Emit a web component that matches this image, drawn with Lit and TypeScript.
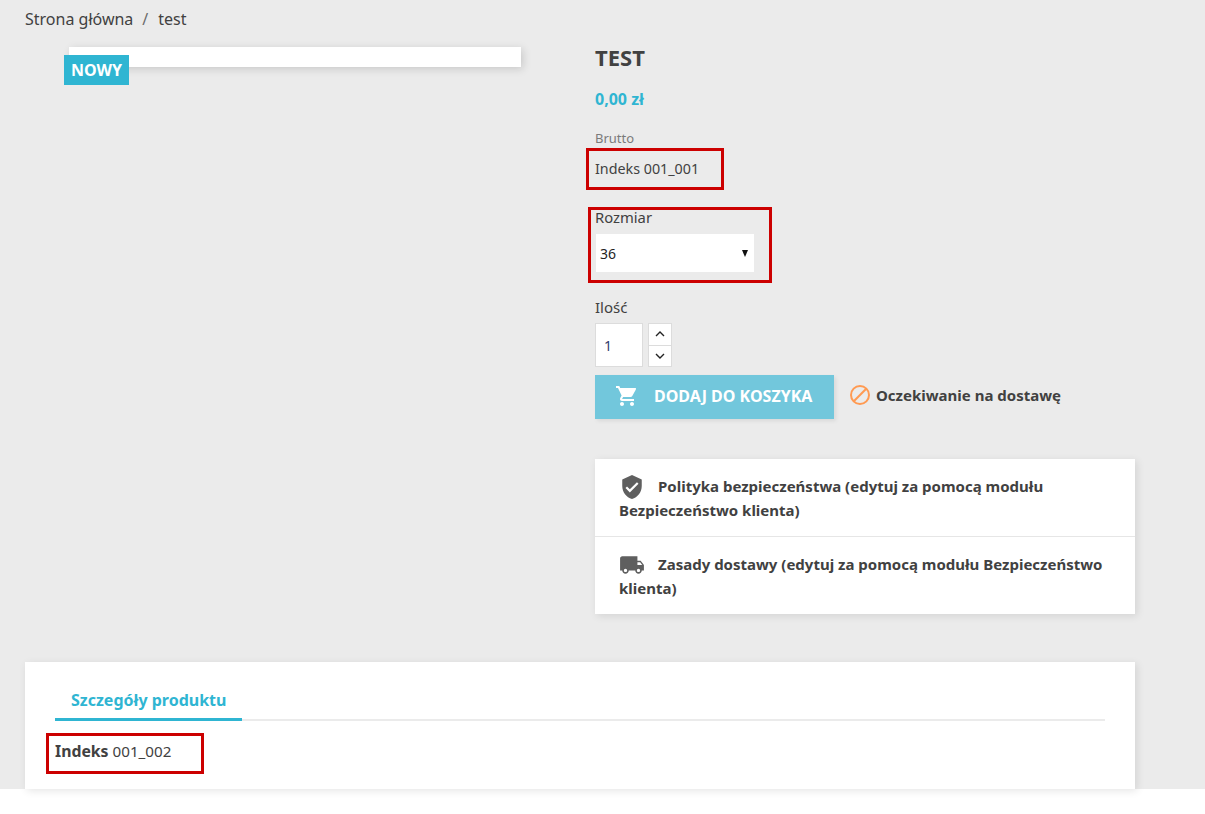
import { LitElement, html, css } from "lit";
import { customElement } from "lit/decorators.js";

@customElement("app-root")
export class AppRoot extends LitElement {
  static styles = css`
    :host { display: block; font-family: "Noto Sans", sans-serif; color: #414141; font-size: 14px; background: #fff; height: 814px; overflow: hidden; }
    * { box-sizing: border-box; }
    .page { background: #ebebeb; height: 789px; padding: 0 70px 0 25px; }
    .crumbs { display: flex; height: 38px; align-items: center; font-size: 16px; color: #414141; gap: 9px; }
    .crumbs .sep { color: #6c6c6c; margin-right: 1px; }
    .product { display: grid; grid-template-columns: 570px 540px; height: 624px; }
    .media { padding: 9px 0 0 44px; }
    .cover { position: relative; width: 452px; height: 20px; background: #fff; box-shadow: 2px 2px 8px 0 rgba(0,0,0,.15); }
    .flag { position: absolute; left: -5px; top: 8px; height: 30px; width: 65px; background: #2fb5d2; color: #fff; font-weight: 700; font-size: 16px; display: flex; align-items: center; justify-content: center; }
    .info { display: flex; flex-direction: column; }
    h1 { margin: 0; height: 24px; margin-top: 7px; font-size: 22px; line-height: 24px; font-weight: 700; text-transform: uppercase; color: #414141; }
    .price { margin-top: 18px; height: 24px; line-height: 24px; font-size: 16px; font-weight: 700; color: #2fb5d2; }
    .tax { margin-top: 18px; height: 18px; line-height: 18px; font-size: 13px; color: #7a7a7a; }
    .ref { position: relative; margin-top: 10px; height: 24px; line-height: 24px; font-size: 14.3px; }
    .mark { position: absolute; border: 3px solid #cc0000; pointer-events: none; }
    .mark.a { left: -9px; top: -9px; width: 138px; height: 42px; }
    .variant { position: relative; margin-top: 24px; font-size: 14px; }
    .variant label { display: block; height: 24px; line-height: 24px; font-size: 14.8px; }
    .mark.b { left: -7px; top: 2px; width: 184px; height: 76px; }
    .selwrap { position: relative; margin: 5px 0 0 1px; width: 158px; height: 38px; }
    select { appearance: none; border: 0; width: 100%; height: 100%; background: #fff; padding: 0 0 0 4px; font: 14px "Noto Sans", sans-serif; color: #232323; border-radius: 0; }
    .arrow { position: absolute; right: 6px; top: 13px; width: 0; height: 0; border-left: 3.5px solid transparent; border-right: 3.5px solid transparent; border-top: 7px solid #111; margin-top: 3px; }
    .qlabel { margin-top: 23px; height: 24px; line-height: 24px; font-size: 15px; }
    .qty { display: flex; gap: 5px; margin-top: 4px; }
    input { width: 48px; height: 44px; border: 1px solid #dcdcdc; background: #fff; padding: 0 0 0 8px; font: 14px "Noto Sans", sans-serif; color: #333a6c; outline: none; border-radius: 0; }
    .spin { display: flex; flex-direction: column; width: 24px; height: 44px; border: 1px solid #dcdcdc; background: #fff; }
    .spin span { flex: 1; display: flex; align-items: center; justify-content: center; }
    .spin span + span { border-top: 1px solid #dcdcdc; }
    .spin svg { width: 10px; height: 6px; fill: none; stroke: #232323; stroke-width: 1.4; }
    .buy { display: flex; align-items: center; margin-top: 8px; }
    button { display: flex; align-items: center; border: 0; width: 239px; height: 44px; padding: 0 0 2px 20px; background: #72c7dc; color: #fff; font: 700 16px/1 "Noto Sans", sans-serif; box-shadow: 2px 2px 4px 0 rgba(0,0,0,.08); }
    button svg { width: 24px; height: 24px; fill: #fff; margin-right: 15px; flex: none; }
    .avail { display: flex; align-items: center; margin: 0 0 4px 15px; font-weight: 700; font-size: 15px; color: #414141; gap: 5px; }
    .avail svg { width: 22px; height: 22px; fill: none; stroke: #ff9a52; stroke-width: 2; }
    .reassure { margin-top: 40px; background: #fff; box-shadow: 2px 2px 8px 0 rgba(0,0,0,.1); }
    .reassure .row { padding: 15px 24px 14px; font-weight: 700; font-size: 15px; line-height: 24px; color: #414141; }
    .reassure .row + .row { border-top: 1px solid #e6e6e6; }
    .reassure svg { width: 26px; height: 26px; fill: #5f5f5f; vertical-align: middle; margin: -6px 13px -4px 0; }
    .tabs { background: #fff; height: 127px; box-shadow: 2px 2px 8px 0 rgba(0,0,0,.1); padding: 20px 30px 0; }
    .tabbar { border-bottom: 2px solid #ebebeb; height: 39px; }
    .tab { display: inline-block; height: 39px; width: 187px; padding-left: 16px; line-height: 36px; font-size: 16px; font-weight: 700; color: #2fb5d2; border-bottom: 3px solid #2fb5d2; }
    .detail { position: relative; margin-top: 18px; height: 24px; line-height: 24px; font-size: 15.2px; }
    .mark.c { left: -9px; top: -6px; width: 158px; height: 41px; }
    .detail b { font-weight: 700; font-size: 15.8px; }
  `;

  render() {
    return html`
      <div class="page">
        <nav class="crumbs"><span>Strona główna</span><span class="sep">/</span><span>test</span></nav>
        <section class="product">
          <div class="media">
            <div class="cover"><span class="flag">NOWY</span></div>
          </div>
          <div class="info">
            <h1>test</h1>
            <div class="price">0,00 zł</div>
            <div class="tax">Brutto</div>
            <div class="ref">Indeks 001_001<i class="mark a"></i></div>
            <div class="variant">
              <label>Rozmiar</label>
              <div class="selwrap">
                <select><option>36</option></select>
                <i class="arrow"></i>
              </div>
              <i class="mark b"></i>
            </div>
            <div class="qlabel">Ilość</div>
            <div class="qty">
              <input .value=${"1"} />
              <div class="spin">
                <span><svg viewBox="0 0 10 6"><path d="M1 5l4-4 4 4"/></svg></span>
                <span><svg viewBox="0 0 10 6"><path d="M1 1l4 4 4-4"/></svg></span>
              </div>
            </div>
            <div class="buy">
              <button>
                <svg viewBox="0 0 24 24"><path d="M7 18c-1.1 0-1.99.9-1.99 2S5.900 22 7 22s2-.9 2-2-.9-2-2-2zM1 2v2h2l3.600 7.590-1.350 2.450c-.16.280-.25.610-.25.960 0 1.100.9 2 2 2h12v-2H7.420c-.14 0-.25-.11-.25-.25l.03-.12.9-1.630h7.450c.75 0 1.410-.41 1.750-1.030l3.580-6.490A1 1 0 0 0 20 4H5.210l-.94-2H1zm16 16c-1.100 0-1.990.9-1.990 2s.89 2 1.990 2 2-.9 2-2-.9-2-2-2z"/></svg>
                DODAJ DO KOSZYKA
              </button>
              <div class="avail">
                <svg viewBox="0 0 22 22"><circle cx="11" cy="11" r="9"/><path d="M4.800 17.200L17.200 4.800"/></svg>
                <span>Oczekiwanie na dostawę</span>
              </div>
            </div>
            <div class="reassure">
              <div class="row"><svg viewBox="0 0 24 24"><path d="M12 1L3 5v6c0 5.550 3.840 10.740 9 12 5.160-1.260 9-6.450 9-12V5l-9-4zm-2 16l-4-4 1.410-1.410L10 14.170l6.590-6.590L18 9l-8 8z"/></svg>Polityka bezpieczeństwa (edytuj za pomocą modułu Bezpieczeństwo klienta)</div>
              <div class="row"><svg viewBox="0 0 24 24"><path d="M20 8h-3V4H3c-1.100 0-2 .9-2 2v11h2c0 1.660 1.340 3 3 3s3-1.340 3-3h6c0 1.660 1.340 3 3 3s3-1.340 3-3h2v-5l-3-4zM6 18.500c-.83 0-1.500-.67-1.500-1.500s.67-1.500 1.500-1.500 1.500.67 1.500 1.500-.67 1.500-1.500 1.500zm13.500-9l1.960 2.500H17V9.500h2.500zm-1.500 9c-.83 0-1.500-.67-1.500-1.500s.67-1.500 1.500-1.500 1.500.67 1.500 1.500-.67 1.500-1.500 1.500z"/></svg>Zasady dostawy (edytuj za pomocą modułu Bezpieczeństwo klienta)</div>
            </div>
          </div>
        </section>
        <section class="tabs">
          <div class="tabbar"><span class="tab">Szczegóły produktu</span></div>
          <div class="detail"><b>Indeks</b> 001_002<i class="mark c"></i></div>
        </section>
      </div>
    `;
  }
}
